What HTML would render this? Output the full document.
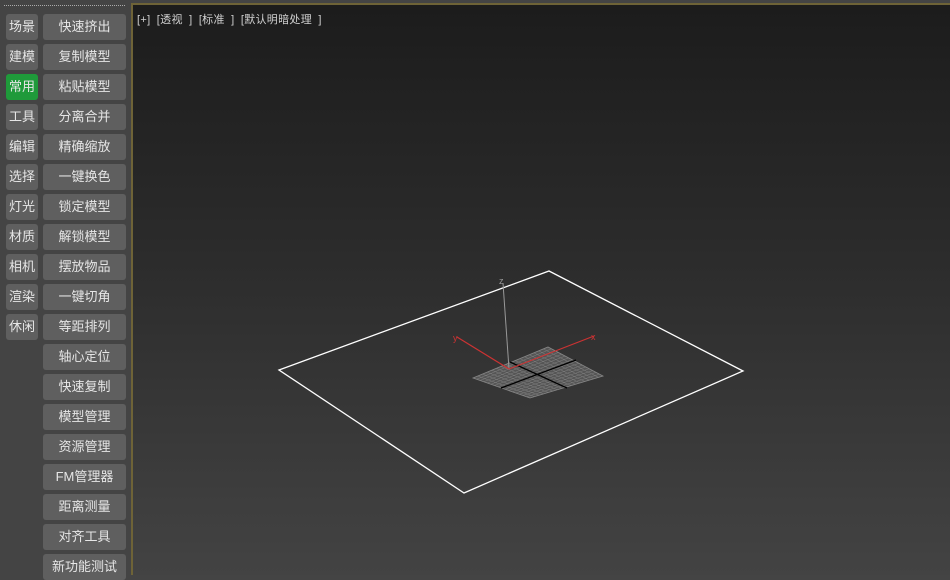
<!DOCTYPE html><html><head><meta charset="utf-8"><style>
body{margin:0;width:950px;height:575px;overflow:hidden;background:#444;font-family:"Liberation Sans","Noto Sans CJK SC",sans-serif;position:relative}
.b{position:absolute;height:26px;background:#5f5f5f;border-radius:3px;color:#e6e6e6;font-size:13px;line-height:26px;text-align:center}
.l{left:6px;width:32px}.r{left:43px;width:83px}
.g{background:#1f9a3a}
#vp{position:absolute;left:131px;top:3px;width:817px;height:570px;border-left:2px solid #6e6337;border-top:2px solid #6e6337;background:linear-gradient(#1c1c1c,#2c2c2c 45%,#434343)}
#t{position:absolute;left:137px;top:11px;color:#d0d0d0;font-size:11px;word-spacing:3px;letter-spacing:0.3px}
#dots{position:absolute;left:4px;top:5px;width:121px;border-top:1px dotted #aaa}
</style></head><body>
<div id="dots"></div>
<div class="b l" style="top:14px">场景</div><div class="b r" style="top:14px">快速挤出</div>
<div class="b l" style="top:44px">建模</div><div class="b r" style="top:44px">复制模型</div>
<div class="b l g" style="top:74px">常用</div><div class="b r" style="top:74px">粘贴模型</div>
<div class="b l" style="top:104px">工具</div><div class="b r" style="top:104px">分离合并</div>
<div class="b l" style="top:134px">编辑</div><div class="b r" style="top:134px">精确缩放</div>
<div class="b l" style="top:164px">选择</div><div class="b r" style="top:164px">一键换色</div>
<div class="b l" style="top:194px">灯光</div><div class="b r" style="top:194px">锁定模型</div>
<div class="b l" style="top:224px">材质</div><div class="b r" style="top:224px">解锁模型</div>
<div class="b l" style="top:254px">相机</div><div class="b r" style="top:254px">摆放物品</div>
<div class="b l" style="top:284px">渲染</div><div class="b r" style="top:284px">一键切角</div>
<div class="b l" style="top:314px">休闲</div><div class="b r" style="top:314px">等距排列</div>
<div class="b r" style="top:344px">轴心定位</div>
<div class="b r" style="top:374px">快速复制</div>
<div class="b r" style="top:404px">模型管理</div>
<div class="b r" style="top:434px">资源管理</div>
<div class="b r" style="top:464px">FM管理器</div>
<div class="b r" style="top:494px">距离测量</div>
<div class="b r" style="top:524px">对齐工具</div>
<div class="b r" style="top:554px">新功能测试</div>
<div id="vp"></div>
<div id="t">[+] [透视 ] [标准 ] [默认明暗处理 ]</div>
<svg width="950" height="575" style="position:absolute;left:0;top:0">
<polygon points="279,370 549,271 743,371 464,493" fill="none" stroke="#fff" stroke-width="1.3"/>
<polygon points="473,378 548,347 603,376 530,398" fill="#555" stroke="#888" stroke-width="0.8"/>
<g stroke="#808080" stroke-width="0.5" fill="none" id="grid"></g>
<line x1="501" y1="388" x2="576" y2="360" stroke="#000" stroke-width="1.3"/>
<line x1="510" y1="362" x2="567" y2="388" stroke="#000" stroke-width="1.3"/>
<line x1="509" y1="369" x2="503" y2="283" stroke="#999" stroke-width="1"/>
<line x1="509" y1="369" x2="594" y2="336" stroke="#c33" stroke-width="1.2"/>
<line x1="509" y1="369" x2="457" y2="337" stroke="#c33" stroke-width="1.2"/>
<text x="499" y="284" fill="#999" font-size="9" font-family="Liberation Sans">z</text>
<text x="591" y="340" fill="#c33" font-size="9" font-family="Liberation Sans">x</text>
<text x="453" y="341" fill="#c33" font-size="9" font-family="Liberation Sans">y</text>
</svg>
<script>
var g=document.getElementById('grid'),s='';
var L=[473,378],T=[548,347],R=[603,376],B=[530,398];
function lerp(a,b,t){return [a[0]+(b[0]-a[0])*t,a[1]+(b[1]-a[1])*t]}
for(var i=1;i<16;i++){var t=i/16;
var a=lerp(L,T,t),b=lerp(B,R,t);s+='<line x1="'+a[0]+'" y1="'+a[1]+'" x2="'+b[0]+'" y2="'+b[1]+'"/>';
a=lerp(L,B,t);b=lerp(T,R,t);s+='<line x1="'+a[0]+'" y1="'+a[1]+'" x2="'+b[0]+'" y2="'+b[1]+'"/>';}
g.innerHTML=s;
</script>
</body></html>
